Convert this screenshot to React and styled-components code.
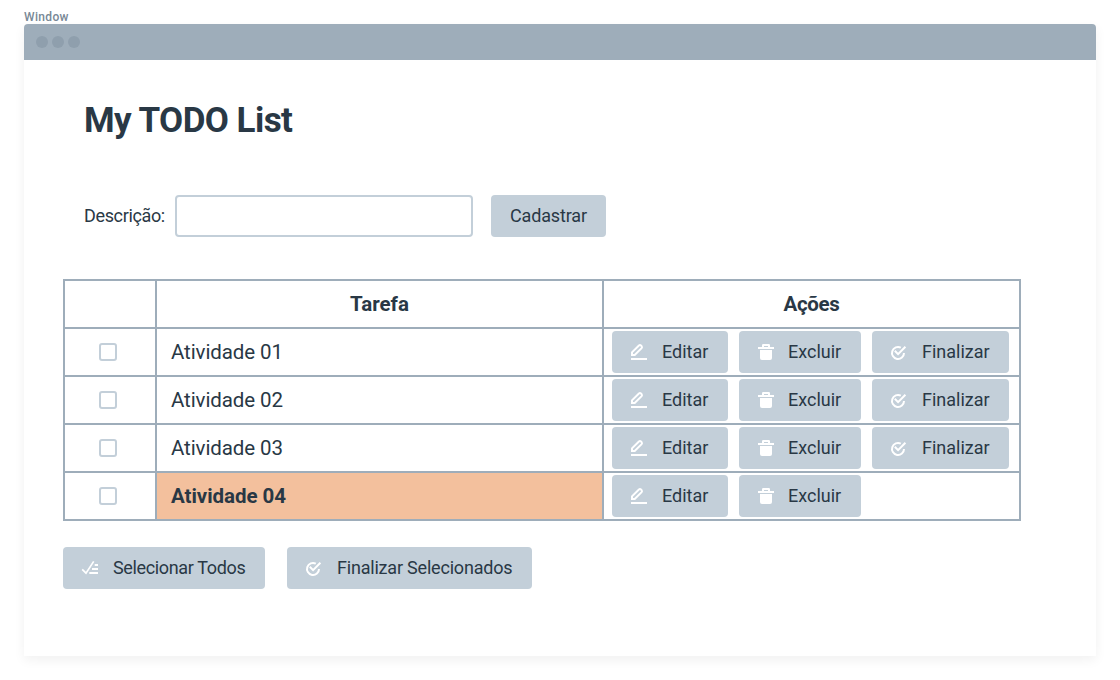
import React from "react";
import styled, { createGlobalStyle } from "styled-components";

const GlobalStyle = createGlobalStyle`
  *, *::before, *::after { box-sizing: border-box; }
  body {
    margin: 0;
    background: #fff;
    color: #293845;
    font-family: Roboto, "Liberation Sans", sans-serif;
  }
`;

const Page = styled.div`
  width: 1120px;
  height: 680px;
  padding: 10px 24px 24px;
  overflow: hidden;
`;

const WindowLabel = styled.div`
  height: 14px;
  line-height: 14px;
  font-size: 12px;
  font-weight: 500;
  letter-spacing: 0.35px;
  color: #788896;
`;

const WindowFrame = styled.main`
  height: 632px;
  border-radius: 4px 4px 0 0;
  background: #fff;
  box-shadow: 0 4px 12px rgba(0, 0, 0, 0.06);
`;

const TitleBar = styled.header`
  display: flex;
  align-items: center;
  gap: 4px;
  height: 36px;
  padding-left: 12px;
  border-radius: 4px 4px 0 0;
  background: #9eadba;
`;

const Dot = styled.span`
  width: 12px;
  height: 12px;
  border-radius: 50%;
  background: #8f9fad;
`;

const Content = styled.div`
  padding: 40px 75px 0 39px;
`;

const Title = styled.h1`
  margin: 0 0 0 21px;
  height: 42px;
  line-height: 42px;
  font-size: 35px;
  font-weight: 700;
  letter-spacing: -0.55px;
`;

const Form = styled.form`
  display: flex;
  align-items: center;
  margin: 53px 0 42px 21px;
`;

const Label = styled.label`
  width: 91px;
  line-height: 42px;
  font-size: 18px;
  letter-spacing: -0.35px;
  white-space: nowrap;
`;

const Input = styled.input`
  width: 298px;
  height: 42px;
  margin-right: 18px;
  padding: 0 12px;
  border: 2px solid #c3cfd9;
  border-radius: 4px;
  background: #fff;
  font: inherit;
  outline: none;
`;

const Button = styled.button`
  display: flex;
  align-items: center;
  flex: none;
  width: ${(p) => p.$width}px;
  height: 42px;
  padding: 0 0 0 ${(p) => p.$inset || 18}px;
  border: 0;
  border-radius: 4px;
  background: #c3cfd9;
  color: #293845;
  font: 400 18px/42px Roboto, "Liberation Sans", sans-serif;
  letter-spacing: ${(p) => p.$spacing || 0}px;
  white-space: nowrap;

  svg {
    flex: none;
    margin-right: ${(p) => p.$iconGap || 13}px;
  }
`;

const Table = styled.div`
  display: grid;
  grid-template-columns: 90px 445px 415px;
  grid-auto-rows: 46px;
  gap: 2px;
  padding: 2px;
  background: #9eadba;
`;

const Cell = styled.div`
  display: flex;
  align-items: center;
  background: #fff;
`;

const HeadCell = styled(Cell)`
  justify-content: center;
  font-size: 20.5px;
  font-weight: 700;
  letter-spacing: ${(p) => p.$spacing || 0}px;
`;

const CheckCell = styled(Cell)`
  padding-left: 34px;
`;

const TaskCell = styled(Cell)`
  padding-left: 14px;
  font-size: 20.5px;
  font-weight: ${(p) => (p.$done ? 700 : 400)};
  letter-spacing: ${(p) => (p.$done ? -0.05 : -0.1)}px;
  background: ${(p) => (p.$done ? "#f3c09d" : "#fff")};
`;

const ActionsCell = styled(Cell)`
  gap: 11px;
  padding-left: 8px;
`;

const Checkbox = styled.input.attrs({ type: "checkbox" })`
  appearance: none;
  width: 18px;
  height: 18px;
  margin: 0;
  border: 2px solid #c3cfd9;
  border-radius: 3px;
  background: #fff;
`;

const Footer = styled.footer`
  display: flex;
  gap: 22px;
  margin-top: 26px;
`;

const EditIcon = () => (
  <svg width="19" height="18" viewBox="0 0 19 18" fill="none" stroke="#fff">
    <path d="M2 12V9.4L8.9 2.5Q10 1.6 11 2.5L11.6 3.1Q12.4 4.1 11.6 5.1L4.7 12Z" strokeWidth="2" />
    <path d="M1 16H17" strokeWidth="2" />
  </svg>
);

const TrashIcon = () => (
  <svg width="19" height="18" viewBox="0 0 19 18" fill="#fff">
    <path d="M1 4H5V2.2Q5 1 6.2 1H11.8Q13 1 13 2.2V4H17V6H1ZM7 3V4H11V3Z" fillRule="evenodd" />
    <path d="M3 7H15V15Q15 17 13 17H5Q3 17 3 15Z" />
  </svg>
);

const DoneIcon = () => (
  <svg width="19" height="18" viewBox="0 0 19 18" fill="none" stroke="#fff" strokeWidth="2">
    <path d="M10.8 4.7A6 6 0 1 0 14 10" />
    <path d="M4.8 7.8L8.1 11.1L15.4 3.8" />
  </svg>
);

const SelectAllIcon = () => (
  <svg width="19" height="18" viewBox="0 0 19 18" fill="none" stroke="#fff">
    <path d="M1.2 10.4L5 14.2L12.7 2.4" strokeWidth="1.7" />
    <path d="M13.7 6H17M11 10H17M8.3 14H17" strokeWidth="2" />
  </svg>
);

const tasks = [
  { name: "Atividade 01", done: false },
  { name: "Atividade 02", done: false },
  { name: "Atividade 03", done: false },
  { name: "Atividade 04", done: true },
];

function TaskRow({ task }) {
  return (
    <>
      <CheckCell>
        <Checkbox aria-label={task.name} />
      </CheckCell>
      <TaskCell $done={task.done}>{task.name}</TaskCell>
      <ActionsCell>
        <Button $width={116}><EditIcon />Editar</Button>
        <Button $width={122} $iconGap={12}><TrashIcon />Excluir</Button>
        {!task.done && <Button $width={137}><DoneIcon />Finalizar</Button>}
      </ActionsCell>
    </>
  );
}

export default function App() {
  return (
    <Page>
      <GlobalStyle />
      <WindowLabel>Window</WindowLabel>
      <WindowFrame>
        <TitleBar><Dot /><Dot /><Dot /></TitleBar>
        <Content>
          <Title>My TODO List</Title>
          <Form onSubmit={(e) => e.preventDefault()}>
            <Label htmlFor="description">Descrição:</Label>
            <Input id="description" />
            <Button $width={115} $inset={19} $spacing={-0.15}>Cadastrar</Button>
          </Form>
          <Table>
            <HeadCell />
            <HeadCell>Tarefa</HeadCell>
            <HeadCell $spacing={-0.3}>Ações</HeadCell>
            {tasks.map((task) => <TaskRow key={task.name} task={task} />)}
          </Table>
          <Footer>
            <Button $width={202} $spacing={-0.35}><SelectAllIcon />Selecionar Todos</Button>
            <Button $width={245} $spacing={-0.2}><DoneIcon />Finalizar Selecionados</Button>
          </Footer>
        </Content>
      </WindowFrame>
    </Page>
  );
}
